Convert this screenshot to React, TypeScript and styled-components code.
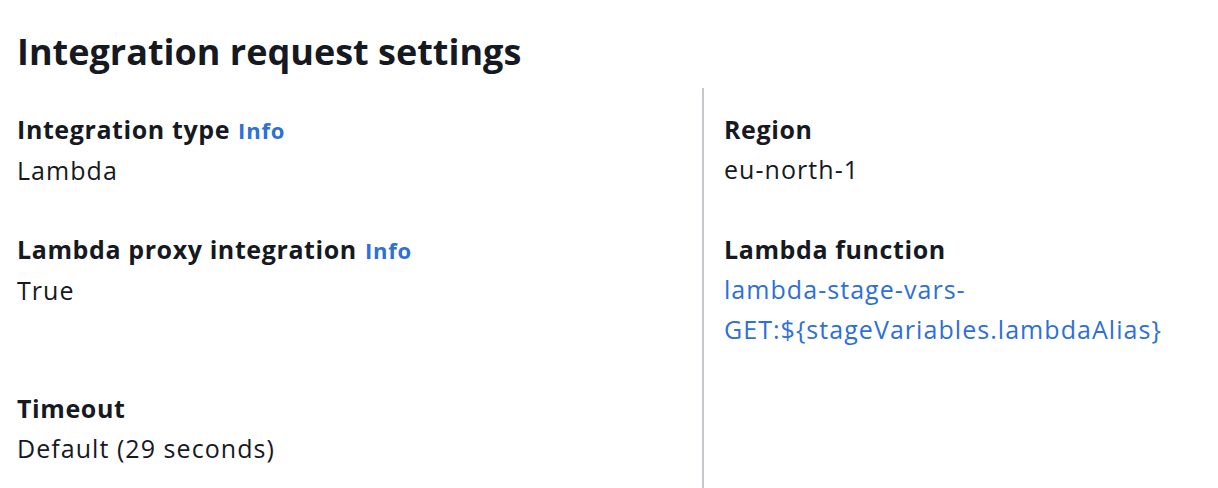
import styled, { createGlobalStyle } from "styled-components"

const GlobalStyle = createGlobalStyle`
  html, body {
    margin: 0;
    padding: 0;
    background: #ffffff;
  }
  body {
    font-family: "Open Sans", "Noto Sans", sans-serif;
    color: #16191f;
  }
`

type Item = {
  label: string
  info?: boolean
  value: string[]
  link?: boolean
}

const left: Item[] = [
  { label: "Integration type", info: true, value: ["Lambda"] },
  { label: "Lambda proxy integration", info: true, value: ["True"] },
  { label: "Timeout", value: ["Default (29 seconds)"] },
]

const right: Item[] = [
  { label: "Region", value: ["eu-north-1"] },
  { label: "Lambda function", value: ["lambda-stage-vars-", "GET:${stageVariables.lambdaAlias}"], link: true },
  { label: "", value: [] },
]

export default function App() {
  return (
    <>
      <GlobalStyle />
      <Section>
        <Title>Integration request settings</Title>
        <Grid>
          {left.map((l, i) => [
            <Cell key={`l${i}`} $first={i === 0}>
              <Field item={l} />
            </Cell>,
            <Cell key={`r${i}`} $first={i === 0} $divided>
              <Field item={right[i]} />
            </Cell>,
          ])}
        </Grid>
      </Section>
    </>
  )
}

function Field({ item }: { item: Item }) {
  if (!item.label) return null
  return (
    <>
      <Label>
        {item.label}
        {item.info && <InfoLink>Info</InfoLink>}
      </Label>
      {item.value.map((v) => (
        <Value key={v} $link={item.link}>{v}</Value>
      ))}
    </>
  )
}

const Section = styled.div`
  padding: 0 0 0 17px;
`

const Title = styled.h2`
  margin: 0;
  padding-top: 28px;
  font-size: 36px;
  line-height: 48px;
  font-weight: 700;
  color: #16191f;
`

const Grid = styled.div`
  display: grid;
  grid-template-columns: 685px 1fr;
  margin-top: 12px;
`

const Cell = styled.div<{ $first?: boolean; $divided?: boolean }>`
  display: flex;
  flex-direction: column;
  padding-top: ${(p) => (p.$first ? "22px" : "0")};
  padding-bottom: 40px;
  ${(p) => p.$divided && `
    border-left: 2px solid #c6c6cd;
    padding-left: 20px;
  `}
`

const Label = styled.div`
  font-size: 25px;
  line-height: 39px;
  font-weight: 700;
  letter-spacing: 0.6px;
  color: #16191f;
`

const InfoLink = styled.span`
  margin-left: 8px;
  font-size: 22px;
  font-weight: 700;
  letter-spacing: 0.8px;
  color: #2e6fd9;
`

const Value = styled.div<{ $link?: boolean }>`
  font-size: 25px;
  line-height: 40px;
  letter-spacing: 1.05px;
  color: ${(p) => (p.$link ? "#2e6fd9" : "#16191f")};
`
